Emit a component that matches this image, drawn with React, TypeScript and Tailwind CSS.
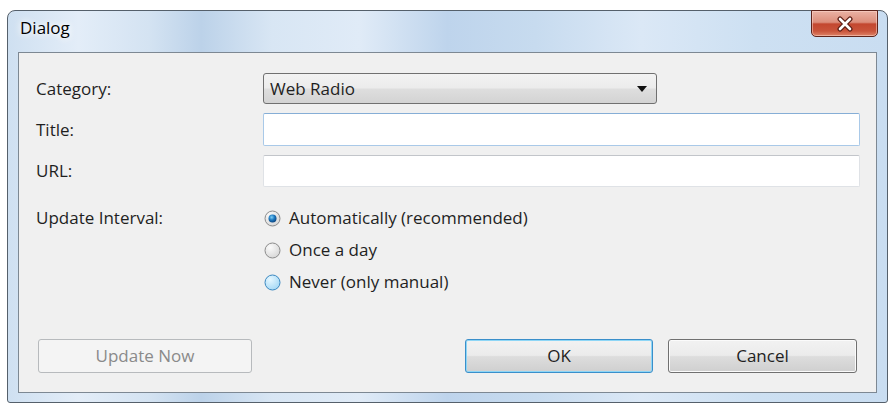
import { useState } from 'react';

type RadioState = 'checked' | 'normal' | 'hover';

const Radio = ({ state }: { state: RadioState }) => (
  <svg width="17" height="17" viewBox="0 0 17 17" className="shrink-0">
    <defs>
      <radialGradient id={`rf-${state}`} cx="0.35" cy="0.3" r="0.8">
        <stop offset="0" stopColor={state === 'hover' ? '#e6f7ff' : '#fbfbfb'} />
        <stop offset="1" stopColor={state === 'hover' ? '#9fd6f5' : '#d4d4d4'} />
      </radialGradient>
      <radialGradient id="dot" cx="0.4" cy="0.35" r="0.7">
        <stop offset="0" stopColor="#7fd0f5" />
        <stop offset="0.5" stopColor="#1c78c0" />
        <stop offset="1" stopColor="#0b3f78" />
      </radialGradient>
    </defs>
    <circle cx="8.5" cy="8.5" r="7.5" fill={`url(#rf-${state})`} stroke={state === 'hover' ? '#3c88c0' : '#8c8c8c'} strokeWidth="1" />
    {state === 'checked' && <circle cx="8.5" cy="8.5" r="4" fill="url(#dot)" />}
  </svg>
);

const App = () => {
  const [interval, setInterval] = useState('auto');

  const options = [
    { id: 'auto', label: 'Automatically (recommended)' },
    { id: 'daily', label: 'Once a day' },
    { id: 'never', label: 'Never (only manual)' },
  ];

  return (
    <div className="min-h-screen bg-white pl-[7px] pt-[10px] text-[17px] text-[#1f1f1f] font-['Open_Sans',sans-serif]">
      {/* Glass window frame */}
      <div className="w-[881px] h-[393px] flex flex-col rounded-t-[8px] rounded-b-[3px] border border-[#55606b] bg-[linear-gradient(90deg,#cfe0f1_0%,#e3edf8_8%,#d4e3f2_16%,#bcd2e9_22%,#d8e6f4_30%,#e0ebf7_40%,#bed4ec_50%,#c7dbef_60%,#dbe8f6_72%,#cde0f2_85%,#c9ddf1_100%)]">
        {/* Title bar */}
        <div className="h-[41px] flex justify-between">
          <span className="pl-[12px] pt-[6px] leading-[22px] text-[17px] text-black [text-shadow:0_0_6px_#ffffff,0_0_10px_#ffffff]">
            Dialog
          </span>
          <button className="mt-[-1px] mr-[9px] w-[67px] h-[27px] flex items-center justify-center rounded-b-[5px] border border-[#5e241b] bg-[linear-gradient(180deg,#eab2a4_0%,#dc8e7b_45%,#c3472f_52%,#c9543b_80%,#de8367_100%)] shadow-[inset_0_0_0_1px_rgba(255,220,210,0.5)]">
            <svg width="18" height="16" viewBox="0 0 18 16">
              <path d="M4 3 L14 13 M14 3 L4 13" stroke="#5a1d14" strokeWidth="5" strokeLinecap="round" />
              <path d="M4 3 L14 13 M14 3 L4 13" stroke="#ffffff" strokeWidth="2.6" strokeLinecap="round" />
            </svg>
          </button>
        </div>

        {/* Client area */}
        <div className="mx-[10px] mb-[9px] flex-1 flex flex-col border border-[#7d8893] bg-[#f0f0f0]">
          <div className="grid grid-cols-[227px_1fr] gap-y-[9px] pl-[17px] pr-[16px] pt-[20px]">
            <div className="h-[31px] flex items-center">Category:</div>
            <div>
              <div className="w-[394px] h-[31px] flex items-center justify-between pl-[6px] pr-[9px] rounded-[3px] border border-[#707070] bg-[linear-gradient(180deg,#f3f3f3_0%,#ececec_48%,#dedede_52%,#d3d3d3_100%)]">
                <span>Web Radio</span>
                <svg width="10" height="6" viewBox="0 0 10 6">
                  <path d="M0 0 H10 L5 6 Z" fill="#111111" />
                </svg>
              </div>
            </div>

            <div className="h-[33px] flex items-center">Title:</div>
            <input className="h-[33px] w-full rounded-[2px] border border-[#a9c9e8] border-t-[#86aed6] bg-white px-[4px] outline-none" />

            <div className="h-[32px] flex items-center">URL:</div>
            <input className="h-[32px] w-full rounded-[2px] border border-[#dfe2e6] border-t-[#c2c5ca] bg-white px-[4px] outline-none" />

            <div className="h-[32px] mt-[6px] flex items-center">Update Interval:</div>
            <div className="mt-[6px] flex flex-col">
              {options.map((opt) => (
                <label key={opt.id} className="h-[32px] flex items-center gap-[8px] pl-[1px] cursor-default" onClick={() => setInterval(opt.id)}>
                  <Radio state={interval === opt.id ? 'checked' : opt.id === 'never' ? 'hover' : 'normal'} />
                  <span>{opt.label}</span>
                </label>
              ))}
            </div>
          </div>

          <div className="flex-1" />

          {/* Buttons */}
          <div className="flex items-center px-[19px] pb-[19px]">
            <button disabled className="w-[214px] h-[34px] rounded-[3px] border border-[#b7babd] bg-[#f4f4f4] text-[#8a8a8a]">
              Update Now
            </button>
            <div className="ml-auto flex gap-[15px]">
              <button className="w-[188px] h-[34px] rounded-[3px] border border-[#3a8fca] shadow-[inset_0_0_0_1px_#8ed6f6] bg-[linear-gradient(180deg,#f2f2f2_0%,#ebebeb_48%,#dddddd_52%,#cfcfcf_100%)]">
                OK
              </button>
              <button className="w-[189px] h-[34px] rounded-[3px] border border-[#707070] shadow-[inset_0_0_0_1px_#fbfbfb] bg-[linear-gradient(180deg,#f2f2f2_0%,#ebebeb_48%,#dddddd_52%,#cfcfcf_100%)]">
                Cancel
              </button>
            </div>
          </div>
        </div>
      </div>
    </div>
  );
};

export default App;
